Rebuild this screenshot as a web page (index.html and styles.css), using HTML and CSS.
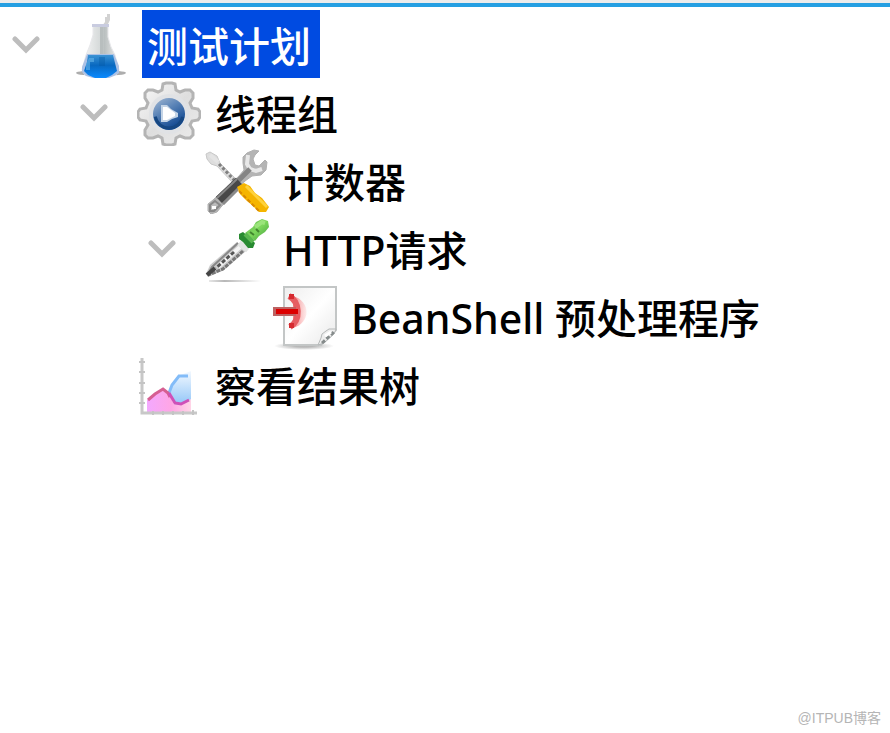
FILE: index.html
```html
<!DOCTYPE html>
<html lang="zh-CN">
<head>
<meta charset="utf-8">
<meta name="viewport" content="width=device-width, initial-scale=1">
<title>测试计划</title>
<link rel="stylesheet" href="styles.css">
</head>
<body>
<main class="panel">
  <ul class="tree">
    <li>
      <div class="row">
        <button class="toggle" type="button" aria-label="折叠 测试计划" aria-expanded="true"><svg class="chevron" viewBox="0 0 28 18"><path d="M3 3 14 14 25 3"/></svg></button>
        <svg class="icon" viewBox="0 0 64 68" aria-hidden="true">
          <defs>
            <linearGradient id="glass"><stop offset="0" stop-color="#f7f7f7"/><stop offset=".48" stop-color="#d6dada"/><stop offset=".6" stop-color="#b9bfbf"/><stop offset="1" stop-color="#f0f0f0"/></linearGradient>
            <linearGradient id="liquid" x2="0" y2="1"><stop offset="0" stop-color="#3b93d4"/><stop offset=".45" stop-color="#0868c0"/><stop offset="1" stop-color="#0a8aff"/></linearGradient>
          </defs>
          <ellipse cx="32" cy="63" rx="25" ry="3" fill="#777" opacity=".6"/>
          <path d="M36 7h2V4h3v6l-3 6h-5l3-4z" fill="#d2d2d2"/>
          <path d="M24 15h15v12l3 10 4 8 4 15-3 5H16l-3-5 4-15 4-10 3-10z" fill="url(#glass)" stroke="#e8e8eb"/>
          <path d="M23 14h17v3H23z" fill="#c9cce0"/>
          <path d="M31 17h3v28h-3z" fill="#b8bebe"/>
          <path d="M18 44h27l5 12v7l-5 3-5 2H24l-7-2-4-4v-5z" fill="#acc2e6"/>
          <path d="M19 45h25l2 8 2 8-5 4-6 3H26l-7-3-4-4 3-9z" fill="url(#liquid)"/>
          <path d="M20 48h5v4h-4v8h-4v-6z" fill="#68b5ea" opacity=".6"/>
          <path d="M30 47h6v9h-6z" fill="#0559a5" opacity=".4"/>
        </svg>
        <span class="label selected">测试计划</span>
      </div>
      <ul>
        <li>
          <div class="row">
            <button class="toggle" type="button" aria-label="折叠 线程组" aria-expanded="true"><svg class="chevron" viewBox="0 0 28 18"><path d="M3 3 14 14 25 3"/></svg></button>
            <svg class="icon" viewBox="0 0 64 68" aria-hidden="true">
              <defs>
                <linearGradient id="metal" x2="1" y2="1"><stop offset="0" stop-color="#fafafa"/><stop offset=".5" stop-color="#dedede"/><stop offset="1" stop-color="#ededed"/></linearGradient>
                <linearGradient id="lens" x2=".6" y2="1"><stop offset="0" stop-color="#a4bad4"/><stop offset=".45" stop-color="#5b84b7"/><stop offset="1" stop-color="#0c448f"/></linearGradient>
              </defs>
              <path d="M25 12 26 6 29 5H35L38 6 39 12 43 14 48 12H53L56 15V20L53 25 55 30 61 31 63 34V39L61 42 55 43 53 47 56 52V57L53 60H48L43 58 39 60 38 66 35 67H29L26 66 25 60 21 58 16 60H11L8 57V52L11 47 9 43 3 42 1 39V34L3 31 9 30 11 25 8 20V15L11 12H16L21 14Z" fill="url(#metal)" stroke="#b4b4b4" stroke-width="3"/>
              <circle cx="32" cy="36" r="20" fill="#e0e2e5"/>
              <circle cx="32" cy="36" r="16" fill="url(#lens)"/>
              <circle cx="32" cy="36" r="14" fill="none" stroke="#164782" stroke-width="3" stroke-dasharray="38 50" stroke-dashoffset="-3"/>
              <path d="M24 27h6l4 4 7 4v4l-6 2-5 3h-6z" fill="#c4d4e6"/>
              <path d="M26 29h4l8 6v3l-8 4h-4z" fill="#fff"/>
            </svg>
            <span class="label">线程组</span>
          </div>
          <ul>
            <li>
              <div class="row">
                <span class="toggle"></span>
                <svg class="icon" viewBox="0 0 64 68" aria-hidden="true">
                  <path d="M1 8 5 6 12 10 15 17 31 33 28 37 12 20 6 18 2 13Z" fill="#ddd" stroke="#c8c8c8"/>
                  <path d="M14 18 30 35" stroke="#808080" stroke-width="3" stroke-dasharray="3 2"/>
                  <path d="M5 9 13 16" stroke="#e4e4e4" stroke-width="4"/>
                  <path d="M42 7 49 4 54 5 50 9 48 13 50 19 54 20 60 14 62 16 61 24 56 29 47 30 40 35 16 61 12 66 6 68 3 65 3 58 8 54 34 30 39 24 38 17 38 11Z" fill="#b4b4b4" stroke="#b0b0b0"/>
                  <path d="M43 9 42 18 45 23 51 25 57 23" fill="none" stroke="#e8e8e8" stroke-width="4"/>
                  <path d="M45 23 31 37" stroke="#858585" stroke-width="5"/>
                  <path d="M34 35 14 54" stroke="#484848" stroke-width="9"/>
                  <path d="M33 43 18 58" stroke="#898989" stroke-width="3"/>
                  <path d="M32 33 12 52" stroke="#888" stroke-width="2"/>
                  <path d="M5 59 10 55 15 59 9 65 5 65Z" fill="#bbb" stroke="#888" stroke-width="2"/>
                  <path d="M7 60h4v3H7z" fill="#fff"/>
                  <path d="M32 41 39 37 45 40 50 47 57 52 64 61 61 66 54 66 48 60 42 55 35 48Z" fill="#f5b500"/>
                  <path d="M41 40 62 61" stroke="#ffd23b" stroke-width="3"/>
                  <path d="M34 45 54 65" stroke="#d98900" stroke-width="2" stroke-dasharray="4 2"/>
                </svg>
                <span class="label">计数器</span>
              </div>
            </li>
            <li>
              <div class="row">
                <button class="toggle" type="button" aria-label="折叠 HTTP请求" aria-expanded="true"><svg class="chevron" viewBox="0 0 28 18"><path d="M3 3 14 14 25 3"/></svg></button>
                <svg class="icon" viewBox="0 0 64 68" aria-hidden="true">
                  <defs>
                    <linearGradient id="floor"><stop offset="0" stop-color="#888" stop-opacity=".2"/><stop offset=".3" stop-color="#888" stop-opacity=".6"/><stop offset="1" stop-color="#888" stop-opacity="0"/></linearGradient>
                    <linearGradient id="bulb" x2="1" y2="1"><stop offset="0" stop-color="#68b656"/><stop offset=".5" stop-color="#7cd75b"/><stop offset="1" stop-color="#429c3d"/></linearGradient>
                  </defs>
                  <path d="M4 66h52v2H4z" fill="url(#floor)"/>
                  <path d="M32 28 41 37 19 56 10 60 3 63 1 60 5 51Z" fill="#ccc"/>
                  <path d="M33 29 7 53 3 60" fill="none" stroke="#888" stroke-width="2"/>
                  <path d="M38 37 18 55 3 61" fill="none" stroke="#777" stroke-width="3" stroke-dasharray="4 1"/>
                  <path d="M35 33 13 53" stroke="#f5f5f5" stroke-width="4"/>
                  <path d="M29 38 11 54" stroke="#555" stroke-width="3" stroke-dasharray="4 2"/>
                  <path d="M2 61 10 54" stroke="#444" stroke-width="4"/>
                  <path d="M34 29 43 36" stroke="#e2e4e2" stroke-width="6"/>
                  <path d="M40 19 48 13 51 8 57 5 63 7 64 13 60 18 54 22 50 27Z" fill="url(#bulb)"/>
                  <path d="M34 20 38 18 44 23 50 29 48 34 43 34 38 28 34 25Z" fill="#288a31"/>
                  <path d="M40 20 48 28" stroke="#59b650" stroke-width="4"/>
                  <path d="M50 13 57 8 60 9" fill="none" stroke="#9be47b" stroke-width="4"/>
                  <path d="M45 18 49 21M51 15 54 18" stroke="#42862f" stroke-width="2"/>
                </svg>
                <span class="label">HTTP请求</span>
              </div>
              <ul>
                <li>
                  <div class="row">
                    <span class="toggle"></span>
                    <svg class="icon" viewBox="0 0 64 68" aria-hidden="true">
                      <defs>
                        <linearGradient id="page" x2="1" y2="1"><stop offset="0" stop-color="#eee"/><stop offset=".5" stop-color="#fff"/><stop offset="1" stop-color="#e8e8e8"/></linearGradient>
                        <linearGradient id="blush"><stop offset="0" stop-color="#f04c50" stop-opacity=".7"/><stop offset="1" stop-color="#ff9d9d" stop-opacity=".2"/></linearGradient>
                        <radialGradient id="shade"><stop offset=".3" stop-color="#999" stop-opacity=".7"/><stop offset="1" stop-color="#999" stop-opacity="0"/></radialGradient>
                      </defs>
                      <ellipse cx="31" cy="64" rx="30" ry="4" fill="url(#shade)"/>
                      <path d="M11 5H63V48L48 63H11Z" fill="url(#page)" stroke="#c3c6c6" stroke-width="2"/>
                      <path d="M63 47H56L53 49 49 52 48 56 45 63 51 61 61 52Z" fill="#eee" stroke="#b5b8b8"/>
                      <path d="M49 61 62 49" stroke="#858b8b" stroke-width="3" stroke-dasharray="4 2"/>
                      <path d="M52 54 58 50" stroke="#fff" stroke-width="3"/>
                      <path d="M20 14C38 19 38 41 20 46Z" fill="url(#blush)"/>
                      <path d="M16 14C27 20 28 38 17 45" fill="none" stroke="#e65d62" stroke-width="6"/>
                      <path d="M16 12h5v5h-5zM16 41h5v5h-5z" fill="#d62a30"/>
                      <path d="M0 25H23V34H0Z" fill="#bd6262"/>
                      <path d="M3 27H25V32H3Z" fill="#dc0000"/>
                    </svg>
                    <span class="label">BeanShell 预处理程序</span>
                  </div>
                </li>
              </ul>
            </li>
          </ul>
        </li>
        <li>
          <div class="row">
            <span class="toggle"></span>
            <svg class="icon" viewBox="0 0 64 68" aria-hidden="true">
              <defs>
                <linearGradient id="sky" x2="0" y2="1"><stop offset="0" stop-color="#f3f9ff"/><stop offset="1" stop-color="#91c5f8"/></linearGradient>
                <linearGradient id="rose" x2="1"><stop offset="0" stop-color="#f3a8ff"/><stop offset=".55" stop-color="#ffa6e5"/><stop offset="1" stop-color="#ffd5e7"/></linearGradient>
              </defs>
              <path d="M33 44 35 35 41 26 54 21V50H50L43 55H38Z" fill="url(#sky)"/>
              <path d="M10 50 18 44 26 39 31 43 37 54 44 55 54 49V62H10Z" fill="url(#rose)"/>
              <path d="M32 43 35 35 42 26H51" fill="none" stroke="#83bcf8" stroke-width="3"/>
              <path d="M11 50 18 44 26 39 31 43 33 47" fill="none" stroke="#d65f92" stroke-width="3"/>
              <path d="M32 43 38 53 44 54 52 50" fill="none" stroke="#cf50b8" stroke-width="3"/>
              <path d="M5 8V63H60" fill="none" stroke="#c8c8c8" stroke-width="3"/>
              <path d="M2 12h6M2 22h6M2 33h6M2 43h6M2 53h6M16 61v4M26 61v4M36 61v4M46 61v4M56 60v5" stroke="#c4c4c4" stroke-width="2"/>
            </svg>
            <span class="label">察看结果树</span>
          </div>
        </li>
      </ul>
    </li>
  </ul>
  <footer class="watermark">@ITPUB博客</footer>
</main>
</body>
</html>
```
FILE: styles.css
```css
* {
  box-sizing: border-box;
}

body {
  margin: 0;
  background: #fff;
  color: #000;
}

.panel {
  display: flex;
  flex-direction: column;
  min-height: 100vh;
  border-top: 3px solid #ececec;
}

.tree {
  flex: 1;
  padding-top: 3px;
  border-top: 4px solid #259fe2;
  font: 500 41px/72px "Noto Sans", "Noto Sans CJK SC", sans-serif;
}

ul {
  margin: 0;
  padding: 0;
  list-style: none;
}

ul ul {
  padding-left: 68px;
}

.row {
  display: flex;
  align-items: center;
  height: 68px;
  white-space: nowrap;
}

.toggle {
  display: flex;
  flex: none;
  align-items: center;
  width: 69px;
  height: 68px;
  padding: 2px 0 0 12px;
  border: 0;
  background: none;
}

.chevron {
  width: 28px;
  height: 18px;
  fill: none;
  stroke: #bdbdbd;
  stroke-width: 5px;
  stroke-linecap: round;
}

.icon {
  flex: none;
  width: 64px;
  height: 68px;
  margin-right: 9px;
}

.label {
  height: 68px;
  padding: 0 9px 0 5px;
}

.selected {
  background: #004be1;
  color: #fff;
}

.watermark {
  padding: 0 9px 5px;
  color: #b5b5b5;
  font: 14px/20px "Liberation Sans", "Noto Sans CJK SC", sans-serif;
  text-align: right;
}
```
